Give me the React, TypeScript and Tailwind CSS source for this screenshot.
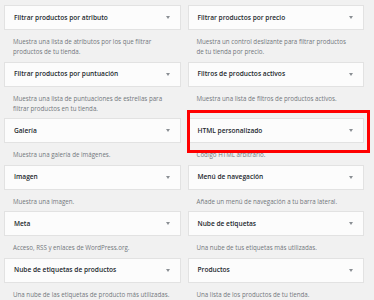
import React from 'react';

interface Widget {
  title: string;
  desc: string;
  highlight?: boolean;
}

const widgets: Widget[] = [
  { title: 'Filtrar productos por atributo', desc: 'Muestra una lista de atributos por los que filtrar productos de tu tienda.' },
  { title: 'Filtrar productos por precio', desc: 'Muestra un control deslizante para filtrar productos de tu tienda por precio.' },
  { title: 'Filtrar productos por puntuación', desc: 'Muestra una lista de puntuaciones de estrellas para filtrar productos en tu tienda.' },
  { title: 'Filtros de productos activos', desc: 'Muestra una lista de filtros de productos activos.' },
  { title: 'Galería', desc: 'Muestra una galería de imágenes.' },
  { title: 'HTML personalizado', desc: 'Código HTML arbitrario.', highlight: true },
  { title: 'Imagen', desc: 'Muestra una imagen.' },
  { title: 'Menú de navegación', desc: 'Añade un menú de navegación a tu barra lateral.' },
  { title: 'Meta', desc: 'Acceso, RSS y enlaces de WordPress.org.' },
  { title: 'Nube de etiquetas', desc: 'Una nube de tus etiquetas más utilizadas.' },
  { title: 'Nube de etiquetas de productos', desc: 'Una nube de las etiquetas de producto más utilizadas.' },
  { title: 'Productos', desc: 'Una lista de los productos de tu tienda.' },
];

function WidgetItem({ widget }: { widget: Widget }) {
  return (
    <div className="group">
      <div className="relative">
        <div className="flex h-[25px] items-center justify-between border border-[#e2e2e2] bg-[#fcfcfc] pl-[9px] pr-[10px]">
          <span className="text-[6.6px] font-semibold text-[#23282d]">{widget.title}</span>
          <span className="h-0 w-0 border-x-[2.5px] border-t-[3px] border-x-transparent border-t-[#8a8f94]" />
        </div>
        {widget.highlight && (
          <div className="pointer-events-none absolute -bottom-[10px] -left-px -right-[6px] -top-[8px] border-[3px] border-[#f00]" />
        )}
      </div>
      <p className="pb-[4.5px] pl-[9px] pr-[6px] pt-[7px] text-[6.2px] leading-[10px] text-[#72777c] group-even:pr-[12px]">
        {widget.desc}
      </p>
    </div>
  );
}

export default function App() {
  return (
    <div
      className="h-[300px] w-[374px] overflow-hidden bg-[#f1f1f1] pl-[4px] pr-[10px] pt-[5px]"
      style={{ fontFamily: '"Open Sans", "Noto Sans", sans-serif' }}
    >
      <div className="grid grid-cols-2 gap-x-[7px]">
        {widgets.map((w) => (
          <WidgetItem key={w.title} widget={w} />
        ))}
      </div>
    </div>
  );
}
